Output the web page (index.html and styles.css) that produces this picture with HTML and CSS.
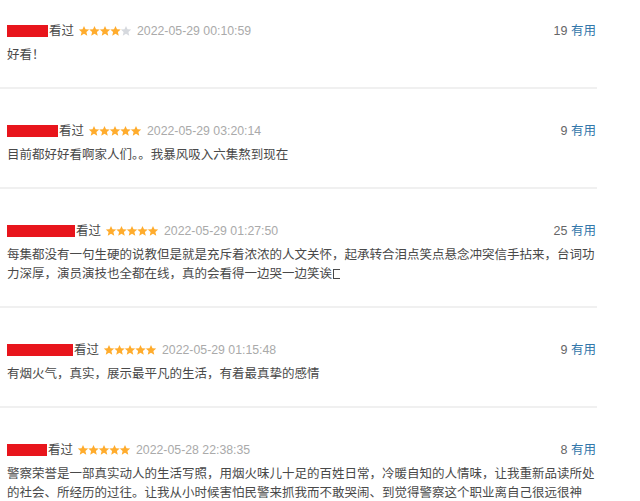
FILE: index.html
```html
<!DOCTYPE html>
<html lang="zh-CN">
<head>
<meta charset="utf-8">
<title>短评</title>
<link rel="stylesheet" href="styles.css">
</head>
<body>
<svg width="0" height="0" class="defs">
  <defs>
    <path id="st" d="M5 -0.1 L6.5 3.3 L10.2 3.6 L7.4 6.05 L8.25 9.7 L5 7.8 L1.75 9.7 L2.6 6.05 L-0.2 3.6 L3.5 3.3 Z"/>
  </defs>
</svg>
<div class="list">
  <div class="item first">
    <div class="head">
      <span class="name" style="width:41px"></span><span class="seen">看过</span>
      <svg class="stars" width="52" height="10" viewBox="0 0 52 10"><use href="#st" x="0" class="on"/><use href="#st" x="10.5" class="on"/><use href="#st" x="21" class="on"/><use href="#st" x="31.5" class="on"/><use href="#st" x="42" class="off"/></svg>
      <span class="date">2022-05-29 00:10:59</span>
      <span class="votes"><span class="count">19</span> <a class="useful">有用</a></span>
    </div>
    <p class="text">好看！</p>
  </div>
  <div class="item">
    <div class="head">
      <span class="name" style="width:51px"></span><span class="seen">看过</span>
      <svg class="stars" width="52" height="10" viewBox="0 0 52 10"><use href="#st" x="0" class="on"/><use href="#st" x="10.5" class="on"/><use href="#st" x="21" class="on"/><use href="#st" x="31.5" class="on"/><use href="#st" x="42" class="on"/></svg>
      <span class="date">2022-05-29 03:20:14</span>
      <span class="votes"><span class="count">9</span> <a class="useful">有用</a></span>
    </div>
    <p class="text">目前都好好看啊家人们。。我暴风吸入六集熬到现在</p>
  </div>
  <div class="item">
    <div class="head">
      <span class="name" style="width:68px"></span><span class="seen">看过</span>
      <svg class="stars" width="52" height="10" viewBox="0 0 52 10"><use href="#st" x="0" class="on"/><use href="#st" x="10.5" class="on"/><use href="#st" x="21" class="on"/><use href="#st" x="31.5" class="on"/><use href="#st" x="42" class="on"/></svg>
      <span class="date">2022-05-29 01:27:50</span>
      <span class="votes"><span class="count">25</span> <a class="useful">有用</a></span>
    </div>
    <p class="text">每集都没有一句生硬的说教但是就是充斥着浓浓的人文关怀，起承转合泪点笑点悬念冲突信手拈来，台词功力深厚，演员演技也全都在线，真的会看得一边哭一边笑诶<span class="tofu"></span></p>
  </div>
  <div class="item">
    <div class="head">
      <span class="name" style="width:66px"></span><span class="seen">看过</span>
      <svg class="stars" width="52" height="10" viewBox="0 0 52 10"><use href="#st" x="0" class="on"/><use href="#st" x="10.5" class="on"/><use href="#st" x="21" class="on"/><use href="#st" x="31.5" class="on"/><use href="#st" x="42" class="on"/></svg>
      <span class="date">2022-05-29 01:15:48</span>
      <span class="votes"><span class="count">9</span> <a class="useful">有用</a></span>
    </div>
    <p class="text">有烟火气，真实，展示最平凡的生活，有着最真挚的感情</p>
  </div>
  <div class="item">
    <div class="head">
      <span class="name" style="width:40px"></span><span class="seen">看过</span>
      <svg class="stars" width="52" height="10" viewBox="0 0 52 10"><use href="#st" x="0" class="on"/><use href="#st" x="10.5" class="on"/><use href="#st" x="21" class="on"/><use href="#st" x="31.5" class="on"/><use href="#st" x="42" class="on"/></svg>
      <span class="date">2022-05-28 22:38:35</span>
      <span class="votes"><span class="count">8</span> <a class="useful">有用</a></span>
    </div>
    <p class="text">警察荣誉是一部真实动人的生活写照，用烟火味儿十足的百姓日常，冷暖自知的人情味，让我重新品读所处的社会、所经历的过往。让我从小时候害怕民警来抓我而不敢哭闹、到觉得警察这个职业离自己很远很神秘，到现在觉得他们就在我们身边。</p>
  </div>
</div>
</body>
</html>
```

FILE: styles.css
```css
html, body {
  margin: 0;
  padding: 0;
  background: #ffffff;
  overflow: hidden;
}
body {
  font-family: "Liberation Sans", "Noto Sans CJK SC", sans-serif;
  font-size: 12.5px;
  color: #494949;
}
.defs {
  position: absolute;
  width: 0;
  height: 0;
}
.list {
  width: 597px;
}
.item {
  padding: 32px 1px 22px 7px;
  border-bottom: 2px solid #f0f0f0;
}
.item.first {
  padding-top: 21px;
}
.head {
  display: flex;
  align-items: center;
  height: 20px;
  line-height: 20px;
  white-space: nowrap;
  font-size: 12.5px;
}
.name {
  display: inline-block;
  height: 12px;
  background: #e8151c;
}
.seen {
  color: #494949;
  margin-left: 1px;
}
.stars {
  margin-left: 5px;
  overflow: visible;
}
.stars .on {
  fill: #ffac2d;
}
.stars .off {
  fill: #d6d9de;
}
.date {
  margin-left: 6px;
  color: #aaaaaa;
  font-size: 12.3px;
}
.votes {
  margin-left: auto;
}
.count {
  color: #666666;
}
.useful {
  color: #3377aa;
  text-decoration: none;
}
.text {
  margin: 5px 0 0 0;
  line-height: 19px;
}
.tofu {
  display: inline-block;
  width: 6px;
  height: 8px;
  border: 1px solid #494949;
  border-right: none;
  margin-left: 1px;
  vertical-align: -1px;
}
```
